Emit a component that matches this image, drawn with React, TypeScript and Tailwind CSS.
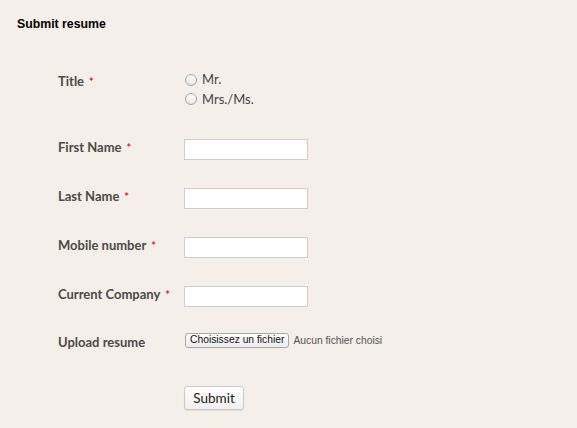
const fields = ['First Name', 'Last Name', 'Mobile number', 'Current Company'];

function Label({ text, required }: { text: string; required?: boolean }) {
  return (
    <div className="w-[126px] shrink-0 text-[13px] font-bold text-[#4d4a48] [font-family:Lato,'Open_Sans',sans-serif]">
      {text}
      {required && <span className="ml-[5px] text-[11px] text-[#e8231d]">*</span>}
    </div>
  );
}

function Radio({ label }: { label: string }) {
  return (
    <label className="flex h-[19.5px] items-center gap-[5px]">
      <span className="ml-[1px] h-[12px] w-[12px] rounded-full border border-[#a5a5a5] bg-gradient-to-b from-[#ffffff] to-[#e6e6e6]" />
      <span className="text-[13px] text-[#444] [font-family:Lato,sans-serif]">{label}</span>
    </label>
  );
}

export default function App() {
  return (
    <div className="min-h-[428px] w-[577px] bg-[#f4efe9] [font-family:'Liberation_Sans',Arial,sans-serif]">
      {/* Heading */}
      <h1 className="pl-[17px] pt-[16px] text-[12.3px] font-bold leading-[16px] text-black">Submit resume</h1>

      {/* Form */}
      <form className="mt-[38px] flex flex-col pl-[58px]">
        <div className="flex">
          <div className="pt-[2px] leading-[19px]">
            <Label text="Title" required />
          </div>
          <div className="flex flex-col">
            <Radio label="Mr." />
            <Radio label="Mrs./Ms." />
          </div>
        </div>

        <div className="mt-[30px] flex flex-col gap-[28px]">
          {fields.map((f) => (
            <div key={f} className="flex h-[21px] items-center">
              <div className="mb-[4px]">
                <Label text={f} required />
              </div>
              <input
                type="text"
                className="h-[21px] w-[124px] border border-[#cfcdcb] bg-white outline-none"
              />
            </div>
          ))}
        </div>

        {/* Upload */}
        <div className="mt-[23px] flex h-[21px] items-center">
          <div className="pt-[4px]">
            <Label text="Upload resume" />
          </div>
          <button
            type="button"
            className="ml-[1px] flex h-[15px] items-center rounded-[3px] border border-[#a8a8a8] bg-gradient-to-b from-[#ffffff] to-[#ececec] px-[4px] text-[10.3px] leading-none text-[#111]"
          >
            Choisissez un fichier
          </button>
          <span className="ml-[4px] text-[10.3px] text-[#555]">Aucun fichier choisi</span>
        </div>

        {/* Submit */}
        <div className="mt-[35px] pl-[126px]">
          <button
            type="button"
            className="h-[24px] w-[60px] rounded-[3px] border border-[#c9c9c9] bg-gradient-to-b from-[#ffffff] to-[#f0f0f0] text-[13.5px] text-[#222] shadow-[0_1px_1px_rgba(0,0,0,0.08)] [font-family:Lato,sans-serif]"
          >
            Submit
          </button>
        </div>
      </form>
    </div>
  );
}
